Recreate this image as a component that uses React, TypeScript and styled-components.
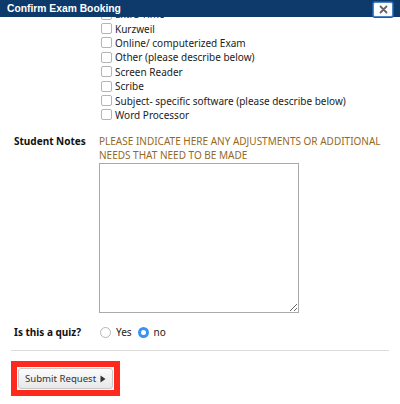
import React from "react"
import styled, { createGlobalStyle } from "styled-components"

const FONT = `"Noto Sans", "DejaVu Sans", sans-serif`

const ACCOMMODATIONS = [
    "Extra Time",
    "Kurzweil",
    "Online/ computerized Exam",
    "Other (please describe below)",
    "Screen Reader",
    "Scribe",
    "Subject- specific software (please describe below)",
    "Word Processor",
]

export default function App() {
    return <>
        <GlobalStyle/>
        <Dialog>
            <TitleBar>
                <Title>Confirm Exam Booking</Title>
                <CloseButton aria-label="close">
                    <svg width="9" height="9" viewBox="0 0 9 9">
                        <path d="M1.5 1.5 L7.5 7.5 M7.5 1.5 L1.5 7.5" stroke="#666" strokeWidth="1.8" strokeLinecap="round"/>
                    </svg>
                </CloseButton>
            </TitleBar>
            <Body>
                <Scroller>
                    <FieldRow>
                        <FieldLabel/>
                        <CheckList>
                            {ACCOMMODATIONS.map(name => <CheckItem key={name}>
                                <CheckBox/>
                                {name}
                            </CheckItem>)}
                        </CheckList>
                    </FieldRow>
                    <FieldRow $top={12}>
                        <FieldLabel>Student Notes</FieldLabel>
                        <div>
                            <Hint>PLEASE INDICATE HERE ANY ADJUSTMENTS OR ADDITIONAL NEEDS THAT NEED TO BE MADE</Hint>
                            <NotesArea/>
                        </div>
                    </FieldRow>
                    <FieldRow $top={12} $center>
                        <FieldLabel>Is this a quiz?</FieldLabel>
                        <RadioGroup>
                            <Radio/>
                            <RadioText>Yes</RadioText>
                            <Radio $checked/>
                            <RadioText>no</RadioText>
                        </RadioGroup>
                    </FieldRow>
                    <Divider/>
                    <Highlight>
                        <SubmitButton>
                            Submit Request
                            <svg width="6" height="8" viewBox="0 0 6 8"><path d="M0.5 0.5 L5.5 4 L0.5 7.5 Z" fill="#333"/></svg>
                        </SubmitButton>
                    </Highlight>
                </Scroller>
            </Body>
        </Dialog>
    </>
}


const GlobalStyle = createGlobalStyle`
    html, body {
        margin: 0;
        padding: 0;
        background: #fff;
    }
    body {
        font-family: ${FONT};
        font-size: 10px;
        color: #222;
    }
`

const Dialog = styled.div`
    width: 400px;
    height: 404px;
    display: flex;
    flex-direction: column;
    background: #fff;
    overflow: hidden;
`

const TitleBar = styled.div`
    height: 17px;
    flex: none;
    display: flex;
    align-items: center;
    justify-content: space-between;
    padding: 0 7px 0 7px;
    background: #0d3a6b;
`

const Title = styled.div`
    color: #fff;
    font-family: "Liberation Sans", Arial, sans-serif;
    font-weight: bold;
    font-size: 10.3px;
    margin-top: -1px;
`

const CloseButton = styled.button`
    width: 20px;
    height: 15px;
    margin-top: 1px;
    padding: 0;
    display: flex;
    align-items: center;
    justify-content: center;
    background: #fdfdfd;
    border: 1px solid #4a86c8;
    border-radius: 2px;
    box-shadow: 0 0 0 1px #1e5aa0;
`

const Body = styled.div`
    flex: 1;
    overflow: hidden;
`

const Scroller = styled.div`
    margin-top: -10px;
    padding: 0 11px;
`

const FieldRow = styled.div<{ $top?: number, $center?: boolean }>`
    display: grid;
    grid-template-columns: 88px 1fr;
    align-items: ${p => p.$center ? "center" : "start"};
    margin-top: ${p => p.$top ?? 0}px;
`

const FieldLabel = styled.div`
    padding-left: 3px;
    font-weight: bold;
    color: #111;
    line-height: 14px;
`

const CheckList = styled.div`
    display: flex;
    flex-direction: column;
    padding-left: 2px;
`

const CheckItem = styled.label`
    display: flex;
    align-items: center;
    gap: 3px;
    height: 14.4px;
    color: #222;
`

const CheckBox = styled.span`
    width: 9px;
    height: 9px;
    border: 1px solid #b4b4b4;
    border-radius: 2px;
    background: #fff;
    flex: none;
`

const Hint = styled.div`
    color: #94691f;
    line-height: 14px;
    padding-right: 4px;
`

const NotesArea = styled.textarea`
    display: block;
    width: 200px;
    height: 150px;
    margin-top: 1px;
    box-sizing: border-box;
    border: 1px solid #aaa;
    resize: both;
    font-family: ${FONT};
`

const RadioGroup = styled.div`
    display: flex;
    align-items: center;
    padding-left: 1px;
`

const Radio = styled.span<{ $checked?: boolean }>`
    box-sizing: border-box;
    width: 11px;
    height: 11px;
    border-radius: 50%;
    flex: none;
    border: ${p => p.$checked ? "3.5px solid #3b93f0" : "1px solid #b5b5b5"};
    background: #fff;
`

const RadioText = styled.span`
    margin: 0 6px 0 5px;
    color: #222;
`

const Divider = styled.div`
    height: 1px;
    background: #dcdcdc;
    margin-top: 11px;
`

const Highlight = styled.div`
    display: inline-block;
    margin-top: 10px;
    border: 6px solid #ff2a1e;
    padding: 1px;
`

const SubmitButton = styled.button`
    display: flex;
    align-items: center;
    gap: 4px;
    height: 21px;
    padding: 0 6px 0 6px;
    font-family: ${FONT};
    font-size: 9.6px;
    color: #333;
    border: 1px solid #c8c8c8;
    border-radius: 3px;
    background: linear-gradient(#fbfbfb, #e8e8e8);
`
